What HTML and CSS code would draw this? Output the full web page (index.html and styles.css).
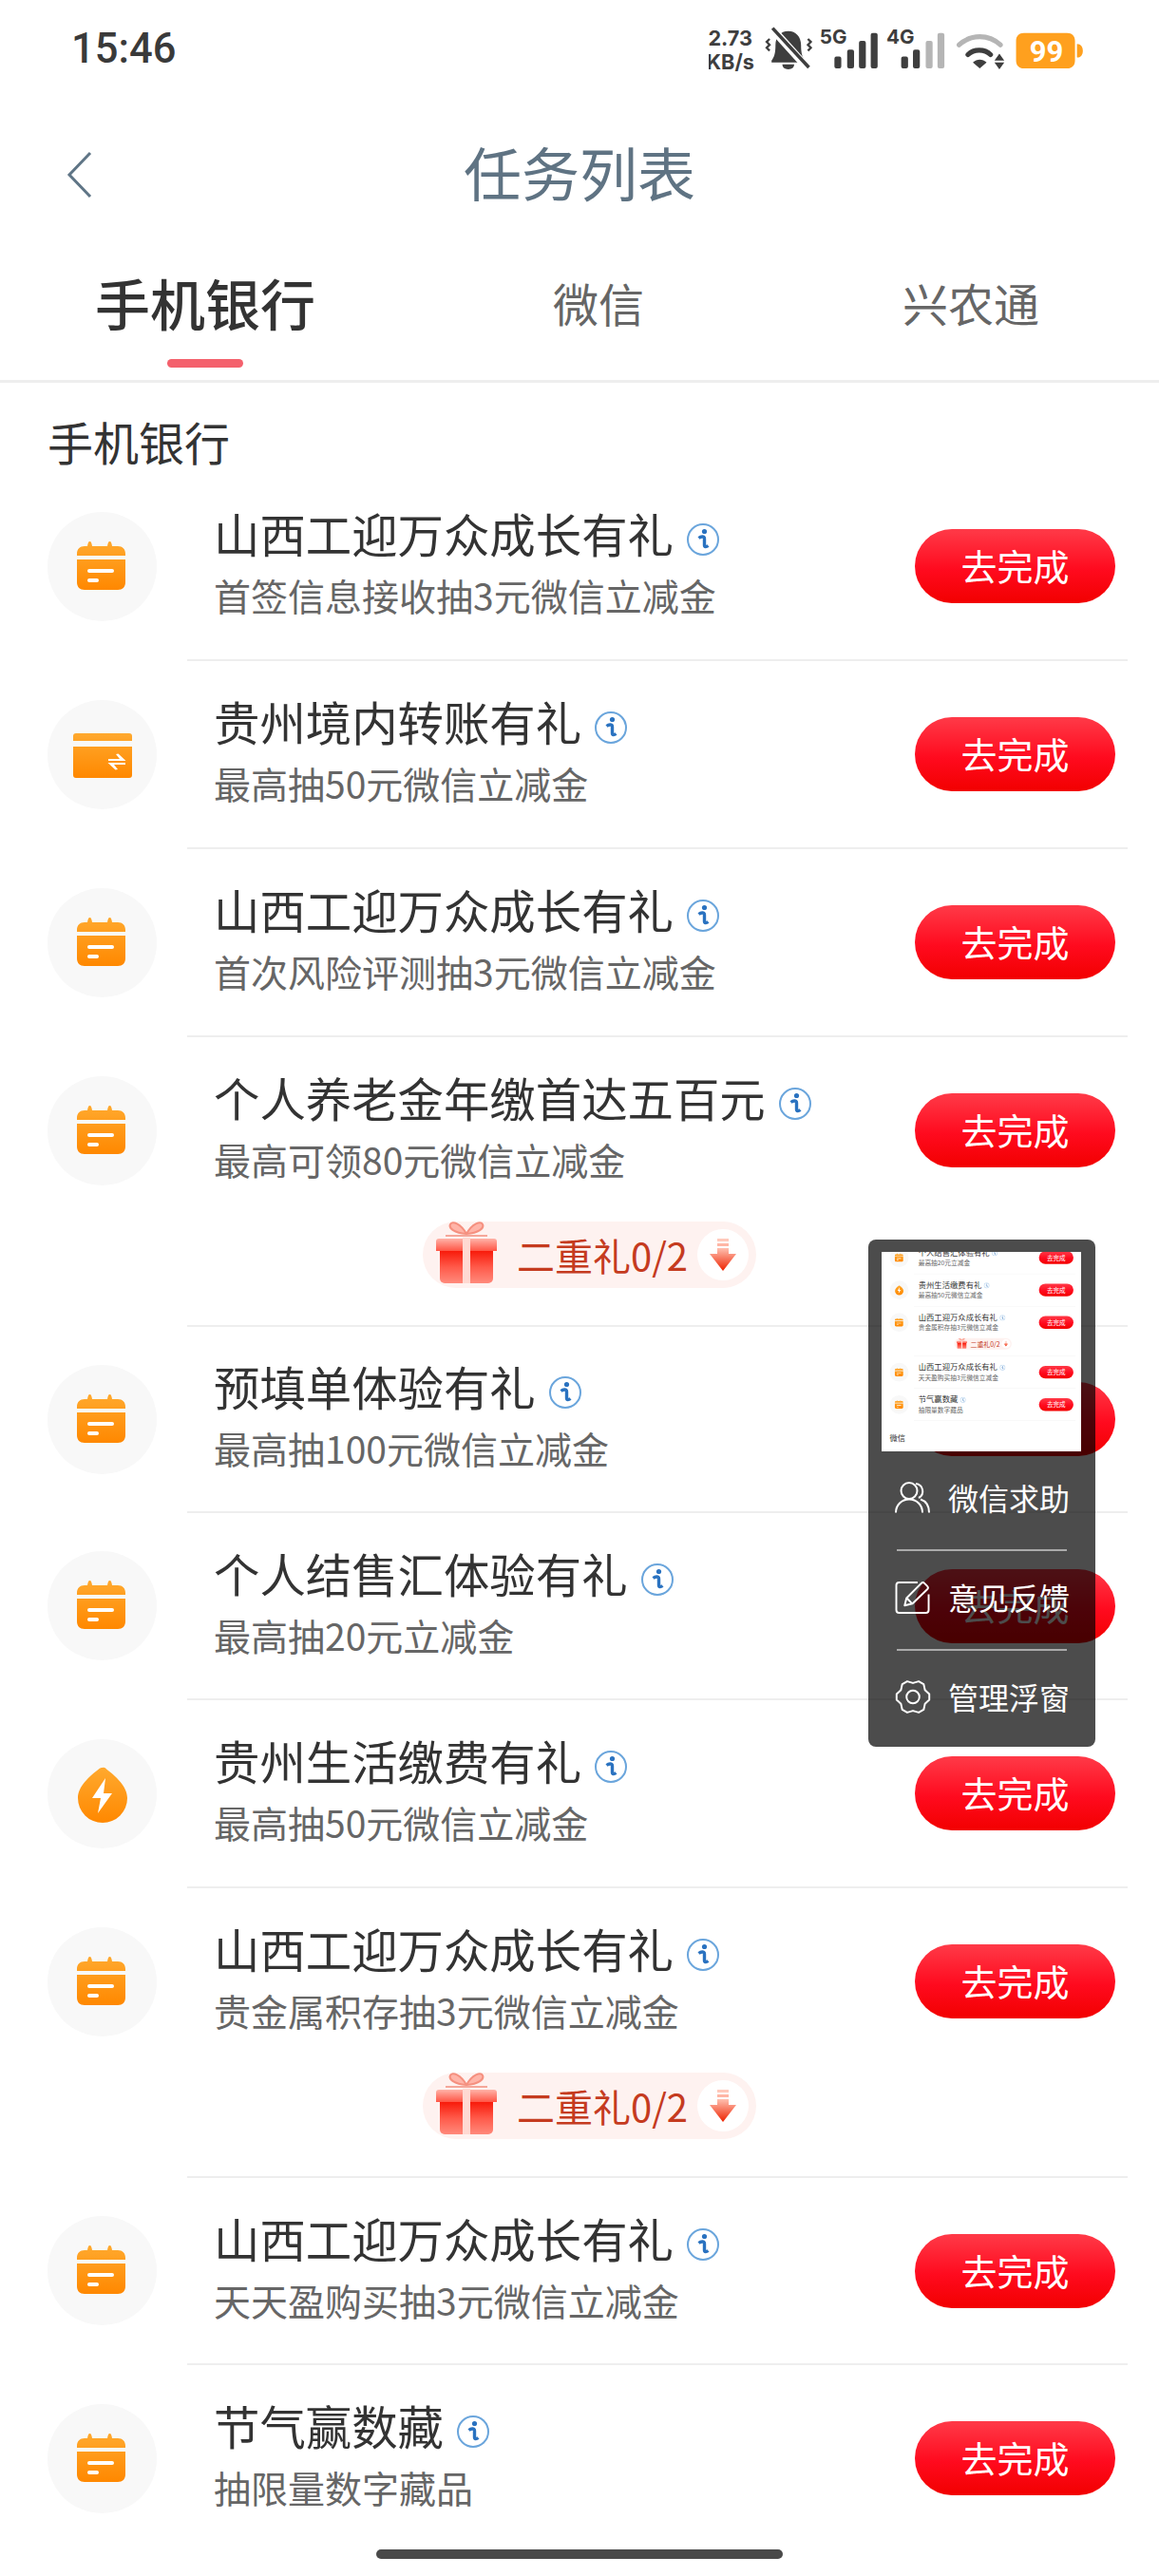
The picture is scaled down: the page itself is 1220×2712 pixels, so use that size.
FILE: index.html
```html
<!DOCTYPE html>
<html lang="zh-CN">
<head>
<meta charset="utf-8">
<title>任务列表</title>
<link rel="stylesheet" href="styles.css">
</head>
<body>
<svg class="defs" width="0" height="0" aria-hidden="true">
  <defs>
    <linearGradient id="og" x1="0" y1="0" x2="0" y2="1"><stop offset="0" stop-color="#ffa92e"/><stop offset="1" stop-color="#ff8800"/></linearGradient>
    <linearGradient id="boxG" x1="0" y1="0" x2="0" y2="1"><stop offset="0" stop-color="#f81a0a"/><stop offset=".5" stop-color="#ff5a4a"/><stop offset="1" stop-color="#ff8a7c"/></linearGradient>
    <linearGradient id="lidG" x1="0" y1="0" x2="0" y2="1"><stop offset="0" stop-color="#ffb3a8"/><stop offset="1" stop-color="#ff5545"/></linearGradient>
    <linearGradient id="arG" x1="0" y1="0" x2="0" y2="1"><stop offset="0" stop-color="#ffc0b0"/><stop offset="1" stop-color="#ee2200"/></linearGradient>
    <symbol id="i-cal" viewBox="0 0 115 115">
      <path fill="url(#og)" d="M42 36c.5-3 1-5 2.500-5s2 2 2.500 5h16c.5-3 1-5 2.500-5s2 2 2.500 5h6c5 0 8 3 8 8v2H31v-2c0-5 3-8 8-8zM31 50h51v24c0 5-3 8-8 8H39c-5 0-8-3-8-8z"/>
      <rect x="42" y="60" width="28" height="4" rx="2" fill="#fff"/>
      <rect x="42" y="70" width="12" height="4" rx="2" fill="#fff"/>
    </symbol>
    <symbol id="i-card" viewBox="0 0 115 115">
      <path fill="url(#og)" d="M30 35h56a3 3 0 0 1 3 3v5H27v-5a3 3 0 0 1 3-3zM27 49h62v30a3 3 0 0 1-3 3H30a3 3 0 0 1-3-3z"/>
      <path fill="#fff" d="M64 62h12l-4-5 2.500-.5 8 7.500H64zM82 68H70l4 5-2.500.5-8-7.500H82z"/>
    </symbol>
    <symbol id="i-drop" viewBox="0 0 115 115">
      <path fill="url(#og)" d="M58 30c2-.5 3 .5 4 1.500C72 39 84 50 84 62a26 26 0 0 1-52 0c0-12 12-23 22-30.500 1-1 2-1.500 4-1.500z"/>
      <path fill="#fff" d="M61 41 47 62h9l-3 16 15-21h-9z"/>
    </symbol>
    <symbol id="i-info" viewBox="0 0 36 36">
      <circle cx="18" cy="18" r="16" fill="none" stroke="#6aa5dc" stroke-width="2"/>
      <circle cx="19.500" cy="9.500" r="2.600" fill="#2a72c0"/>
      <path d="M13.500 16.500c2-1.500 6-2.500 6 .5v7c0 2 2 2 4 .5" fill="none" stroke="#2a72c0" stroke-width="3.400"/>
    </symbol>
    <symbol id="i-gift" viewBox="0 0 66 66">
      <path d="M33 13C27 2 18-1 16 3s4 9 17 10zM33 13C39 2 48-1 50 3s-4 9-17 10z" fill="#ffb4a8" stroke="#f5907f" stroke-width="2"/>
      <path d="M11 15h44" stroke="#f5a79a" stroke-width="2"/>
      <path d="M4 18h58a3 3 0 0 1 3 3v10H1V21a3 3 0 0 1 3-3z" fill="url(#lidG)"/>
      <path d="M5 31h56v29a5 5 0 0 1-5 5H10a5 5 0 0 1-5-5z" fill="url(#boxG)"/>
      <rect x="29" y="17" width="8" height="48" fill="#ffd9d2"/>
    </symbol>
    <symbol id="i-arrow" viewBox="0 0 28 36">
      <rect x="8" y="1" width="12" height="3" fill="#ffc9bb"/>
      <rect x="8" y="6" width="12" height="3" fill="#ffb6a5"/>
      <path d="M8 11h12v6h8L14 35 0 17h8z" fill="url(#arG)"/>
    </symbol>
  </defs>
</svg>

<div class="page">
  <header class="status">
    <span class="clock">15:46</span>
    <svg class="status-icons" viewBox="744 11 385 80">
      <text class="st-txt" x="766" y="47" text-anchor="middle" font-size="21">2.73</text>
      <text class="st-txt" x="766" y="71" text-anchor="middle" font-size="21">KB/s</text>
      <path d="M825 32c-8 0-13 6-13 14 0 8-1 12-4 16v2h34v-2c-3-4-4-8-4-16 0-8-5-14-13-14z" fill="#3e3e3e"/>
      <path d="M819 66h12c0 3-2 5-6 5s-6-2-6-5z" fill="#3e3e3e"/>
      <path d="M807 28l38 42" stroke="#fff" stroke-width="8"/>
      <path d="M809 29l37 40" stroke="#3e3e3e" stroke-width="3.500"/>
      <path d="M806 40l-3 3 3 3-3 3 3 3M845 40l3 3-3 3 3 3-3 3" fill="none" stroke="#3e3e3e" stroke-width="2.200"/>
      <text class="st-txt" x="857" y="45" font-size="20">5G</text>
      <g fill="#3e3e3e">
        <rect x="872" y="58" width="7" height="12" rx="2"/><rect x="885" y="51" width="7" height="19" rx="2"/><rect x="897" y="42" width="7" height="28" rx="2"/><rect x="909" y="34" width="7" height="36" rx="2"/>
      </g>
      <text class="st-txt" x="925" y="45" font-size="20">4G</text>
      <g>
        <rect x="940" y="58" width="7" height="12" rx="2" fill="#3e3e3e"/><rect x="952" y="51" width="7" height="19" rx="2" fill="#3e3e3e"/><rect x="965" y="42" width="7" height="28" rx="2" fill="#b5b5b5"/><rect x="977" y="34" width="7" height="36" rx="2" fill="#b5b5b5"/>
      </g>
      <path d="M999 46c12-11 30-11 42 0" fill="none" stroke="#b5b5b5" stroke-width="5" stroke-linecap="round"/>
      <path d="M1008 56c6-6 17-6 23 0" fill="none" stroke="#3e3e3e" stroke-width="5" stroke-linecap="round"/>
      <path d="M1020 70l-7-6c4-4 10-4 14 0z" fill="#3e3e3e"/>
      <path d="M1040 55l5 7h-10zM1040 71l-5-7h10z" fill="#3e3e3e"/>
      <path d="M1065 34h44c5 0 8 3 8 8v20c0 5-3 8-8 8h-44c-5 0-8-3-8-8V42c0-5 3-8 8-8zM1119 45c4 0 6 3 6 7s-2 7-6 7z" fill="#ffa01e"/>
      <text class="st-bat" x="1088" y="63" text-anchor="middle" font-size="30">99</text>
    </svg>
  </header>

  <nav class="navbar">
    <svg class="back" width="30" height="50" viewBox="0 0 30 50"><path d="M26 2 4 25l22 23" fill="none" stroke="#5f7586" stroke-width="3"/></svg>
    <h1 class="nav-title">任务列表</h1>
  </nav>

  <div class="tabs">
    <div class="tab tab-active">手机银行<span class="tab-bar"></span></div>
    <div class="tab tab-mid">微信</div>
    <div class="tab tab-end">兴农通</div>
  </div>

  <h2 class="section">手机银行</h2>

  <ul class="tasks">
    <li class="task"><div class="task-main"><span class="badge"><svg class="badge-ic"><use href="#i-cal"/></svg></span><div class="task-body"><div class="task-text"><div class="task-title">山西工迎万众成长有礼<svg class="info"><use href="#i-info"/></svg></div><div class="task-sub">首签信息接收抽3元微信立减金</div></div><span class="go">去完成</span></div></div></li>
    <li class="task"><div class="task-main"><span class="badge"><svg class="badge-ic"><use href="#i-card"/></svg></span><div class="task-body"><div class="task-text"><div class="task-title">贵州境内转账有礼<svg class="info"><use href="#i-info"/></svg></div><div class="task-sub">最高抽50元微信立减金</div></div><span class="go">去完成</span></div></div></li>
    <li class="task"><div class="task-main"><span class="badge"><svg class="badge-ic"><use href="#i-cal"/></svg></span><div class="task-body"><div class="task-text"><div class="task-title">山西工迎万众成长有礼<svg class="info"><use href="#i-info"/></svg></div><div class="task-sub">首次风险评测抽3元微信立减金</div></div><span class="go">去完成</span></div></div></li>
    <li class="task"><div class="task-main"><span class="badge"><svg class="badge-ic"><use href="#i-cal"/></svg></span><div class="task-body"><div class="task-text"><div class="task-title">个人养老金年缴首达五百元<svg class="info"><use href="#i-info"/></svg></div><div class="task-sub">最高可领80元微信立减金</div></div><span class="go">去完成</span></div></div>
      <div class="bonus"><svg class="bonus-gift"><use href="#i-gift"/></svg><div class="bonus-pill"><span class="bonus-text">二重礼0/2</span><span class="bonus-down"><svg class="bonus-arrow"><use href="#i-arrow"/></svg></span></div></div></li>
    <li class="task task-s1"><div class="task-main"><span class="badge"><svg class="badge-ic"><use href="#i-cal"/></svg></span><div class="task-body"><div class="task-text"><div class="task-title">预填单体验有礼<svg class="info"><use href="#i-info"/></svg></div><div class="task-sub">最高抽100元微信立减金</div></div><span class="go">去完成</span></div></div></li>
    <li class="task task-s2"><div class="task-main"><span class="badge"><svg class="badge-ic"><use href="#i-cal"/></svg></span><div class="task-body"><div class="task-text"><div class="task-title">个人结售汇体验有礼<svg class="info"><use href="#i-info"/></svg></div><div class="task-sub">最高抽20元立减金</div></div><span class="go">去完成</span></div></div></li>
    <li class="task"><div class="task-main"><span class="badge"><svg class="badge-ic"><use href="#i-drop"/></svg></span><div class="task-body"><div class="task-text"><div class="task-title">贵州生活缴费有礼<svg class="info"><use href="#i-info"/></svg></div><div class="task-sub">最高抽50元微信立减金</div></div><span class="go">去完成</span></div></div></li>
    <li class="task"><div class="task-main"><span class="badge"><svg class="badge-ic"><use href="#i-cal"/></svg></span><div class="task-body"><div class="task-text"><div class="task-title">山西工迎万众成长有礼<svg class="info"><use href="#i-info"/></svg></div><div class="task-sub">贵金属积存抽3元微信立减金</div></div><span class="go">去完成</span></div></div>
      <div class="bonus"><svg class="bonus-gift"><use href="#i-gift"/></svg><div class="bonus-pill"><span class="bonus-text">二重礼0/2</span><span class="bonus-down"><svg class="bonus-arrow"><use href="#i-arrow"/></svg></span></div></div></li>
    <li class="task task-s2"><div class="task-main"><span class="badge"><svg class="badge-ic"><use href="#i-cal"/></svg></span><div class="task-body"><div class="task-text"><div class="task-title">山西工迎万众成长有礼<svg class="info"><use href="#i-info"/></svg></div><div class="task-sub">天天盈购买抽3元微信立减金</div></div><span class="go">去完成</span></div></div></li>
    <li class="task task-last"><div class="task-main"><span class="badge"><svg class="badge-ic"><use href="#i-cal"/></svg></span><div class="task-body"><div class="task-text"><div class="task-title">节气赢数藏<svg class="info"><use href="#i-info"/></svg></div><div class="task-sub">抽限量数字藏品</div></div><span class="go">去完成</span></div></div></li>
  </ul>

  <aside class="float">
    <div class="thumb">
      <div class="thumb-page">
        <ul class="tasks">
          <li class="task"><div class="task-main"><span class="badge"><svg class="badge-ic"><use href="#i-cal"/></svg></span><div class="task-body"><div class="task-text"><div class="task-title">个人结售汇体验有礼<svg class="info"><use href="#i-info"/></svg></div><div class="task-sub">最高抽20元立减金</div></div><span class="go">去完成</span></div></div></li>
          <li class="task"><div class="task-main"><span class="badge"><svg class="badge-ic"><use href="#i-drop"/></svg></span><div class="task-body"><div class="task-text"><div class="task-title">贵州生活缴费有礼<svg class="info"><use href="#i-info"/></svg></div><div class="task-sub">最高抽50元微信立减金</div></div><span class="go">去完成</span></div></div></li>
          <li class="task"><div class="task-main"><span class="badge"><svg class="badge-ic"><use href="#i-cal"/></svg></span><div class="task-body"><div class="task-text"><div class="task-title">山西工迎万众成长有礼<svg class="info"><use href="#i-info"/></svg></div><div class="task-sub">贵金属积存抽3元微信立减金</div></div><span class="go">去完成</span></div></div>
            <div class="bonus"><svg class="bonus-gift"><use href="#i-gift"/></svg><div class="bonus-pill"><span class="bonus-text">二重礼0/2</span><span class="bonus-down"><svg class="bonus-arrow"><use href="#i-arrow"/></svg></span></div></div></li>
          <li class="task"><div class="task-main"><span class="badge"><svg class="badge-ic"><use href="#i-cal"/></svg></span><div class="task-body"><div class="task-text"><div class="task-title">山西工迎万众成长有礼<svg class="info"><use href="#i-info"/></svg></div><div class="task-sub">天天盈购买抽3元微信立减金</div></div><span class="go">去完成</span></div></div></li>
          <li class="task"><div class="task-main"><span class="badge"><svg class="badge-ic"><use href="#i-cal"/></svg></span><div class="task-body"><div class="task-text"><div class="task-title">节气赢数藏<svg class="info"><use href="#i-info"/></svg></div><div class="task-sub">抽限量数字藏品</div></div><span class="go">去完成</span></div></div></li>
        </ul>
        <h2 class="section thumb-section">微信</h2>
        <ul class="tasks">
          <li class="task"><div class="task-main"><span class="badge"></span><div class="task-body"><div class="task-text"><div class="task-title">0.01元首次绑卡有礼</div></div></div></div></li>
        </ul>
      </div>
    </div>
    <div class="float-item">
      <svg class="float-ic" viewBox="0 0 38 34"><g fill="none" stroke="#fff" stroke-width="2"><circle cx="15" cy="10" r="8.500"/><path d="M1 33c0-8 6-14 14-14s14 6 14 14"/><path d="M22 2.500a8 8 0 0 1 3 15M27 19c6 2 9 7 9 14"/></g></svg>
      <span>微信求助</span>
    </div>
    <div class="float-line"></div>
    <div class="float-item">
      <svg class="float-ic" viewBox="0 0 38 36"><g fill="none" stroke="#fff" stroke-width="2" stroke-linejoin="round"><path d="M24 2H4a3 3 0 0 0-3 3v27a3 3 0 0 0 3 3h29a3 3 0 0 0 3-3V15"/><path d="M10 27l2-8L28 3a2.500 2.500 0 0 1 3.500 0l3 3a2.500 2.500 0 0 1 0 3.500L18.500 25zM12.500 19l5.500 6"/></g></svg>
      <span>意见反馈</span>
    </div>
    <div class="float-line"></div>
    <div class="float-item">
      <svg class="float-ic" viewBox="0 -1 38 36"><g fill="none" stroke="#fff" stroke-width="2" stroke-linejoin="round"><path d="M36.700 13.900 36.700 20.100 32 24.500 30.600 30.800 25.200 33.900 19 32 12.800 33.900 7.400 30.800 6 24.500 1.300 20.100 1.300 13.900 6 9.500 7.400 3.200 12.800 .1 19 2 25.200 .1 30.600 3.200 32 9.500z"/><circle cx="19" cy="17" r="7"/></g></svg>
      <span>管理浮窗</span>
    </div>
  </aside>

  <div class="home-bar"></div>
</div>
</body>
</html>
```

FILE: styles.css
```css
* { box-sizing: border-box; }
html, body { margin: 0; padding: 0; background: #fff; }
body { font-family: "Noto Sans CJK SC", "Noto Sans", sans-serif; color: #333; }
ul { list-style: none; margin: 0; padding: 0; }
h1, h2 { margin: 0; font-weight: 400; }
.defs { position: absolute; }

.page { position: relative; width: 1220px; height: 2712px; overflow: hidden; background: #fff; }

.status { height: 104px; display: flex; justify-content: space-between; align-items: center; padding: 0 76px 0 75px; }
.clock { font-family: Roboto, sans-serif; font-weight: 500; font-size: 43.5px; line-height: 1; color: #3a3a3a; }
.status-icons { display: block; width: 398px; height: 82.700px; }
.st-txt { font-family: Inter, Roboto, sans-serif; font-weight: 700; fill: #3e3e3e; }
.st-bat { font-family: Roboto, sans-serif; font-weight: 700; fill: #fff; }

.navbar { position: relative; height: 160px; display: flex; align-items: center; justify-content: center; padding-bottom: 6px; }
.nav-title { font-size: 61px; line-height: 70px; color: #5f7383; }
.back { position: absolute; left: 69px; top: 55px; }

.tabs { height: 139px; border-bottom: 3px solid #eee; position: relative; display: flex; align-items: flex-start; }
.tab { position: relative; line-height: 70px; padding-top: 19px; }
.tab-active { margin-left: 100px; font-size: 58px; font-weight: 500; color: #333; width: 232px; }
.tab-mid { margin-left: 250px; font-size: 48px; color: #666; width: 96px; }
.tab-end { margin-left: 272px; font-size: 48px; color: #666; }
.tab-bar { position: absolute; left: 76px; bottom: -34px; width: 80px; height: 9px; border-radius: 5px; background: #f4606c; }

.section { font-size: 48px; line-height: 60px; color: #333; padding: 31px 0 0 50px; height: 95px; }

.task { padding: 0 33px 0 50px; }
.task::after { content: ""; display: block; height: 2px; margin-left: 147px; background: #eeeeee; }
.task-last::after { background: transparent; }
.task-main { display: flex; align-items: center; height: 196px; }
.task-s1 .task-main { height: 194px; }
.task-s2 .task-main { height: 195px; }
.badge { flex: none; width: 115px; height: 115px; border-radius: 50%; background: #f8f8f8; display: block; }
.badge-ic { display: block; width: 115px; height: 115px; }
.task-body { flex: 1; display: flex; align-items: center; justify-content: space-between; margin-left: 60px; padding-right: 13px; }
.task-text { padding-bottom: 10px; }
.task-title { font-size: 48.400px; line-height: 66px; color: #333; display: flex; align-items: center; white-space: nowrap; }
.task-sub { font-size: 39px; line-height: 56px; color: #666; white-space: nowrap; margin-top: 4px; }
.info { width: 36px; height: 36px; margin-left: 13px; flex: none; margin-top: 14px; }

.go { flex: none; width: 211px; height: 78px; border-radius: 39px; background: linear-gradient(180deg, #ff3a48 0%, #ff0a1e 55%, #f20000 100%); color: #fff; font-size: 38px; line-height: 76px; text-align: center; }

.bonus { display: flex; justify-content: center; align-items: center; height: 107px; padding: 0 0 41px 14px; position: relative; }
.bonus-gift { position: relative; z-index: 1; width: 66px; height: 66px; flex: none; margin-left: 3px; margin-right: -79px; margin-top: -4px; }
.bonus-pill { display: flex; align-items: center; height: 70px; border-radius: 35px; background: #fef2f0; padding: 0 8px 0 99px; }
.bonus-text { font-size: 40px; line-height: 70px; color: #c53b1f; white-space: nowrap; }
.bonus-down { display: flex; align-items: center; justify-content: center; width: 54px; height: 54px; border-radius: 50%; background: #fff; margin-left: 10px; }
.bonus-arrow { width: 28px; height: 36px; }

.float { position: absolute; left: 914px; top: 1305px; width: 239px; border-radius: 8px; background: rgba(0, 0, 0, .7); padding: 13px 14px 5px; z-index: 5; }
.thumb { position: relative; width: 210px; height: 210px; overflow: hidden; background: #fff; }
.thumb-page { position: absolute; left: 0; top: 0; width: 1220px; transform-origin: 0 0; transform: translateY(-10.800px) scale(.172); }
.thumb-section { height: 139px; padding-top: 69px; }
.float-item { display: flex; align-items: center; height: 96px; padding-left: 14px; color: #fff; font-size: 32px; line-height: 40px; white-space: nowrap; }
.float-ic { width: 38px; height: 35px; flex: none; margin-right: 18px; }
.float-line { height: 2px; margin: 7px 16px 0; background: #aaa; }

.home-bar { position: absolute; left: 396px; top: 2684px; width: 428px; height: 10px; border-radius: 5px; background: #4a4a4a; }
```
